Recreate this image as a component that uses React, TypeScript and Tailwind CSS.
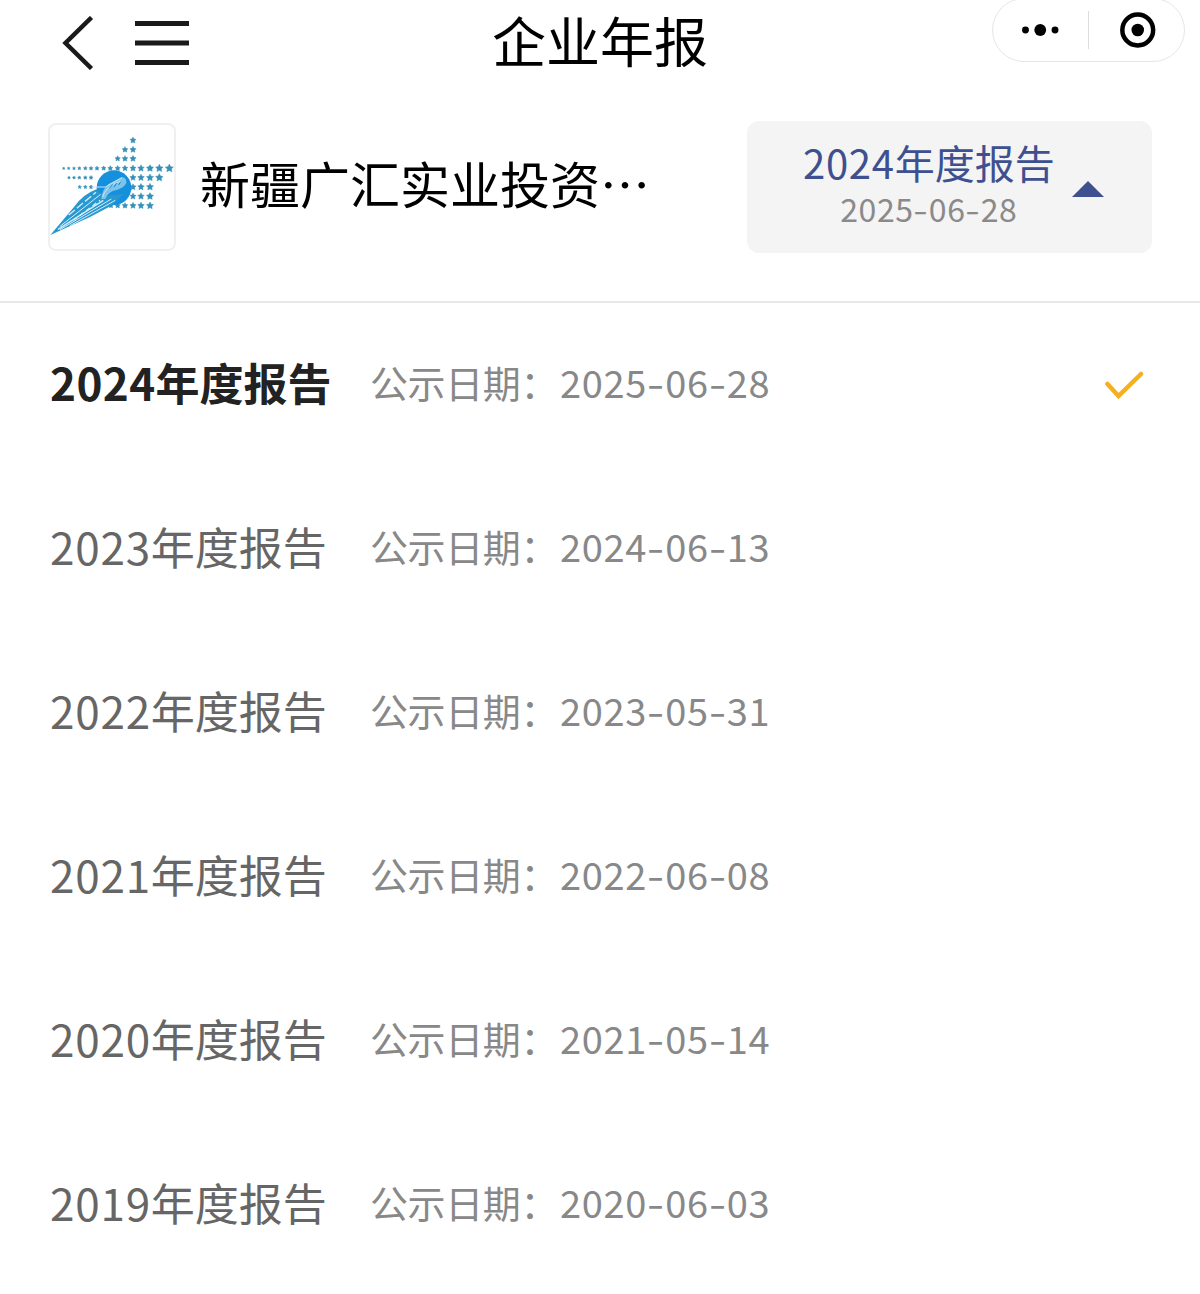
/**
 * Annual report picker
 *
 * Nav bar, company header with the selected year, and the list of
 * published reports.
 */

const FONT = "font-['Noto_Sans_CJK_SC','Noto_Sans',sans-serif]";

interface Report {
  year: string;
  date: string;
}

const REPORTS: Report[] = [
  { year: "2024", date: "2025-06-28" },
  { year: "2023", date: "2024-06-13" },
  { year: "2022", date: "2023-05-31" },
  { year: "2021", date: "2022-06-08" },
  { year: "2020", date: "2021-05-14" },
  { year: "2019", date: "2020-06-03" },
];

/* ---- Company logo ---- */

// y, then the x of every star in that row
const STAR_ROWS: [number, number[]][] = [
  [46, [249]],
  [74, [225, 249]],
  [101, [203, 225, 249]],
  [130, [41, 56, 72, 88, 106, 123, 141, 161, 181, 203, 225, 249, 273, 300, 328, 358]],
  [158, [57, 72, 88, 106, 123, 249, 273, 300, 328]],
  [186, [89, 106, 123, 249, 273, 300]],
  [214, [249, 273, 300]],
  [242, [183, 203, 225, 249, 273, 300]],
];

function starPoints(cx: number, cy: number) {
  const r = 3 + cx * 0.027;
  return Array.from({ length: 10 }, (_, i) => {
    const radius = i % 2 ? r * 0.5 : r;
    const a = (Math.PI / 5) * i - Math.PI / 2;
    return `${(cx + radius * Math.cos(a)).toFixed(1)},${(cy + radius * Math.sin(a)).toFixed(1)}`;
  }).join(" ");
}

function CompanyLogo() {
  return (
    <svg viewBox="0 0 372 372" className="size-full">
      {STAR_ROWS.map(([y, xs]) =>
        xs.map((x) => (
          <polygon key={`${x}-${y}`} points={starPoints(x, y)} fill="#3590b8" stroke="#3590b8" strokeWidth="1.5" />
        )),
      )}
      <circle cx="192" cy="188" r="52" fill="#1590dc" />
      {/* comet tail */}
      <path d="M1 330 L72 246 Q98 208 141 192 L160 214 L222 206 L184 242 L120 276 Z" fill="#2798d0" />
      <g stroke="#d4eefa" fill="none">
        <path d="M30 304 L152 208" strokeWidth="3" />
        <path d="M24 313 L160 226" strokeWidth="4" />
        <path d="M30 314 L184 222" strokeWidth="3" />
        <path d="M60 302 L196 226" strokeWidth="3" />
        <path d="M56 270 L138 202" strokeWidth="4" strokeDasharray="24 8" />
        <path d="M70 286 L150 226" strokeWidth="4" strokeDasharray="14 10" />
      </g>
      {/* head */}
      <path d="M154 222 Q156 192 176 177 L214 157 Q230 156 229 174 Q220 192 188 198 Q172 206 166 222 Z" fill="#7cc4ea" />
      <g stroke="#c4e7f7" fill="none" strokeWidth="3">
        <path d="M126 186 H166 L216 158" />
        <path d="M158 216 Q164 186 212 168" />
      </g>
      <path d="M178 190 L188 178 M192 186 L200 174 M206 180 L212 170" stroke="#1f86c4" strokeWidth="3" />
    </svg>
  );
}

/* ---- Text helpers ---- */

function DateText({ value }: { value: string }) {
  return (
    <span className="tracking-[0.018em]">
      {value.split("-").map((part, i) => (
        <span key={i}>
          {i > 0 && <span className="mx-[0.055em] inline-block scale-x-130">-</span>}
          {part}
        </span>
      ))}
    </span>
  );
}

/* ---- Sections ---- */

function NavBar() {
  return (
    <header className="grid h-[121px] grid-cols-3 items-start">
      <div className="flex gap-10 pt-4 pl-[62px] text-[#1a1a1a]">
        <svg viewBox="0 0 32 54" className="h-[54px] w-8" fill="none" stroke="currentColor" strokeWidth="4.5">
          <path d="M29.5 1.5 L3.5 27 L29.5 52.5" />
        </svg>
        <svg viewBox="0 0 56 54" className="h-[54px] w-14" stroke="currentColor" strokeWidth="5">
          <path d="M1 7.5 H55 M1 27 H55 M1 46.5 H55" />
        </svg>
      </div>
      <h1 className="text-center text-[54px] leading-[79px] text-black">企业年报</h1>
      <div className="-mt-0.5 mr-[15px] flex h-16 w-[193px] items-center justify-self-end rounded-full border border-[#e6e6e6]">
        <svg viewBox="0 0 96 38" className="h-[38px] w-24 border-r border-[#dcdcdc]">
          <circle cx="33" cy="19" r="3.5" />
          <circle cx="48" cy="19" r="6" />
          <circle cx="63" cy="19" r="3.5" />
        </svg>
        <svg viewBox="0 0 96 38" className="h-[38px] w-24">
          <circle cx="49" cy="19" r="15.5" fill="none" stroke="#000" strokeWidth="4.5" />
          <circle cx="49" cy="19" r="6.3" />
        </svg>
      </div>
    </header>
  );
}

function CompanyHeader() {
  return (
    <section className="flex h-[182px] items-start border-b-2 border-[#e8e8e8] px-12">
      <div className="mt-0.5 size-32 shrink-0 overflow-hidden rounded-lg border-2 border-[#f0f0f0]">
        <CompanyLogo />
      </div>
      <div className="ml-6 flex-1 text-[50px] leading-[123px] whitespace-nowrap text-black">新疆广汇实业投资…</div>
      <button className="flex h-[132px] w-[405px] items-center rounded-xl bg-[#f4f4f4] pb-1.5 pl-14">
        <span className="flex flex-col items-center">
          <span className="text-[40px] leading-[48px] text-[#3e5090]">
            <span className="tracking-[0.018em]">2024</span>年度报告
          </span>
          <span className="text-[32px] leading-[44px] text-[#8a8a8a]">
            <DateText value="2025-06-28" />
          </span>
        </span>
        <svg viewBox="0 0 32 16" className="mt-2.5 ml-[17px] h-4 w-8">
          <path d="M0 16 L16 0 L32 16 Z" fill="#3e5090" />
        </svg>
      </button>
    </section>
  );
}

function ReportRow({ report, selected }: { report: Report; selected: boolean }) {
  return (
    <li className="flex h-[164px] items-center pr-14 pb-1.5 pl-[50px]">
      <span
        className={`w-80 text-[44px] leading-[64px] ${selected ? "font-bold text-[#222222]" : "text-[#666666]"}`}
      >
        <span className={selected ? "tracking-[0.01em]" : "tracking-[0.018em]"}>{report.year}</span>年度报告
      </span>
      <span className="w-[190px] text-[38px] leading-[56px] tracking-[-0.01em] whitespace-nowrap text-[#888888]">
        公示日期：
      </span>
      <span className="text-[38px] leading-[56px] text-[#888888]">
        <DateText value={report.date} />
      </span>
      {selected && (
        <svg viewBox="0 0 40 30" className="mt-2 ml-auto h-[30px] w-10" fill="none" stroke="#f5b021" strokeWidth="4.5">
          <path d="M3.500 13 L14.500 25 L37 3" strokeLinecap="round" />
        </svg>
      )}
    </li>
  );
}

export default function App() {
  return (
    <div className={`min-h-[1294px] w-[1200px] overflow-hidden bg-white ${FONT}`}>
      <NavBar />
      <CompanyHeader />
      <ul>
        {REPORTS.map((r, i) => (
          <ReportRow key={r.year} report={r} selected={i === 0} />
        ))}
      </ul>
    </div>
  );
}
